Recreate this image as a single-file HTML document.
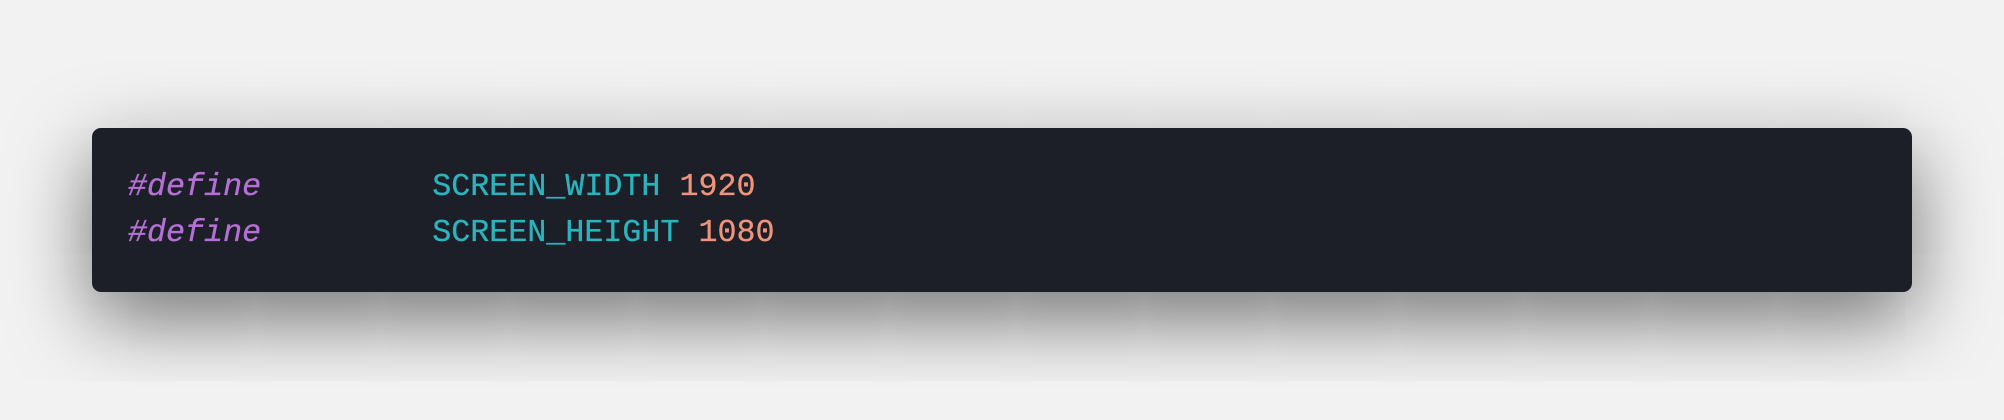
<!DOCTYPE html>
<html><head><meta charset="utf-8"><style>
html,body{margin:0;padding:0;width:2004px;height:420px;background:#f2f2f2;overflow:hidden}
pre{margin:0;font-family:"Liberation Mono",monospace;font-size:31.7px;line-height:46px;color:#2bb3be;position:absolute;left:128px;top:164px;font-weight:500;-webkit-text-stroke:0.3px currentColor}
.k{color:#b66fd6;font-style:italic}
.n{color:#f0937a}
</style></head><body>
<div style="position:absolute;left:92px;top:128px;width:1820px;height:164px;background:#1c1f27;border-radius:9px;box-shadow:0 26px 80px rgba(0,0,0,0.55)"></div>
<pre><span class="k">#define</span>         SCREEN_WIDTH <span class="n">1920</span>
<span class="k">#define</span>         SCREEN_HEIGHT <span class="n">1080</span></pre>
</body></html>
